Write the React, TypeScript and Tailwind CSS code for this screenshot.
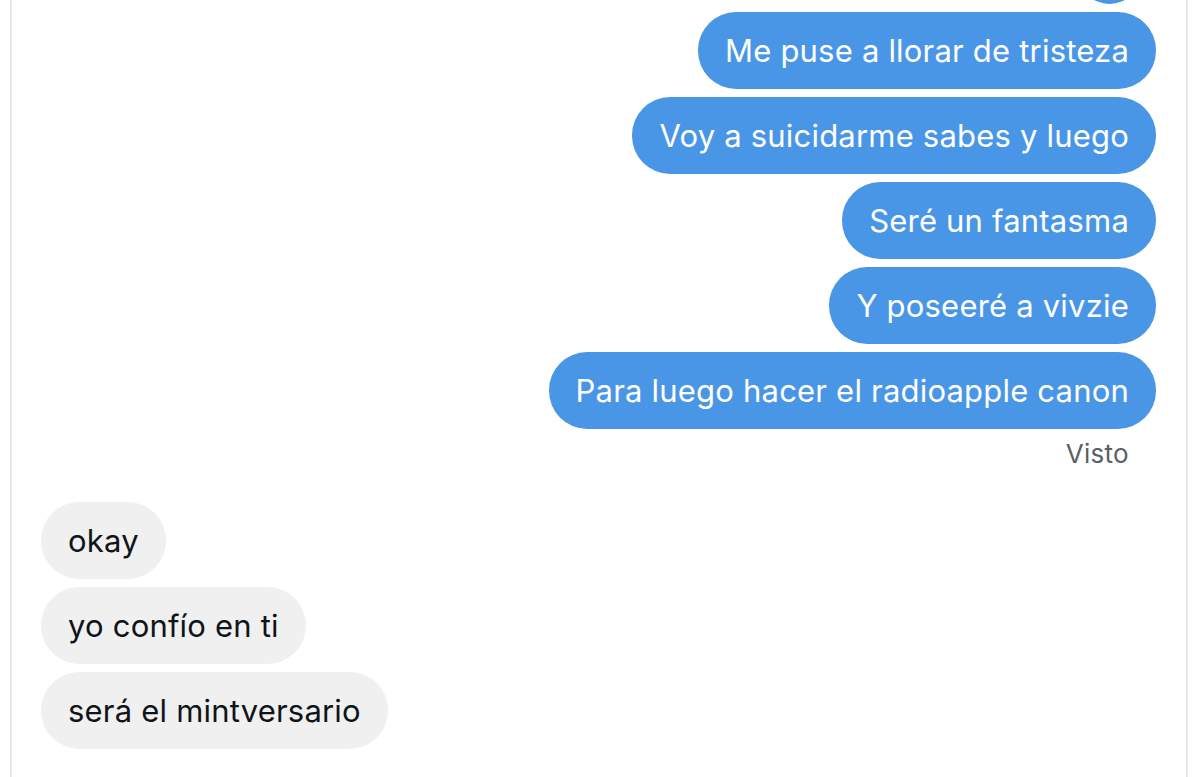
import React from 'react';

const sent = [
  '',
  'Me puse a llorar de tristeza',
  'Voy a suicidarme sabes y luego',
  'Seré un fantasma',
  'Y poseeré a vivzie',
  'Para luego hacer el radioapple canon',
];

const received = ['okay', 'yo confío en ti', 'será el mintversario'];

const App: React.FC = () => {
  return (
    <div className="h-[777px] w-full overflow-hidden bg-white font-['Inter',sans-serif]">
      <div className="ml-[10px] h-full w-[1178px] border-x-2 border-[#e7e7e7] pl-[29px] pr-[30px]">
        <div className="flex flex-col items-end gap-[8px]">
          {sent.map((text, i) => (
            <div
              key={i}
              className={
                i === 0
                  ? '-mt-[73px] mr-[15px] h-[77px] w-[63px] rounded-full bg-[#4a96e6]'
                  : 'flex h-[77px] items-center rounded-[38px] bg-[#4a96e6] px-[27px] text-[31px] leading-[36px] tracking-[0.2px] text-white'
              }
            >
              {text}
            </div>
          ))}
        </div>
        <div className="mt-[10px] pr-[27px] text-right text-[26px] leading-[30px] tracking-[0.3px] text-[#5b6064]">
          Visto
        </div>
        <div className="mt-[33px] flex flex-col items-start gap-[8px]">
          {received.map((text) => (
            <div
              key={text}
              className="flex h-[77px] items-center rounded-[38px] bg-[#f0f0f0] px-[27px] text-[31px] leading-[36px] tracking-[0.2px] text-[#0f1419]"
            >
              {text}
            </div>
          ))}
        </div>
      </div>
    </div>
  );
};

export default App;
